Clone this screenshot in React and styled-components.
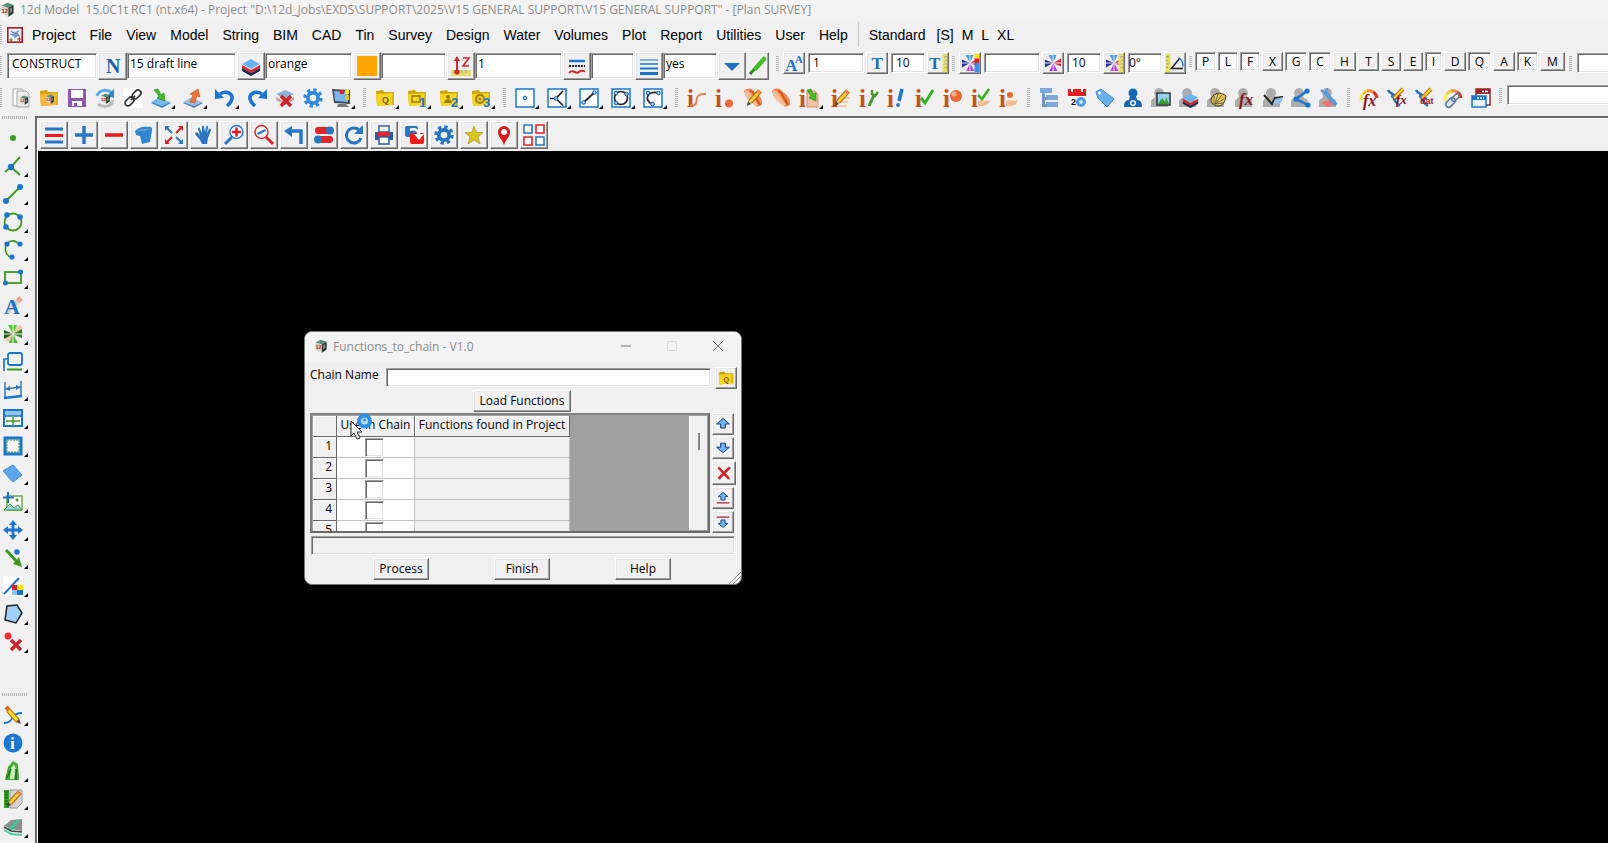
import React from "react";
import styled, { createGlobalStyle, css } from "styled-components";

const UI = `"Open Sans", "Noto Sans", sans-serif`;
const BLUE = "#1a75cf";
const GREEN = "#3f9a1e";
const RED = "#d8232a";
const RUST = "#c8501a";

const GlobalStyle = createGlobalStyle`
  * { box-sizing: border-box; }
  body { margin: 0; background: #f0f0f0; font-family: ${UI}; font-size: 12px; color: #000; overflow: hidden; }
  button, input { font: inherit; color: inherit; border-radius: 0; }
  svg { overflow: visible; flex: none; }
`;

/* ---------- bevels ---------- */
const raised = css`
  border: 1px solid;
  border-color: #fff #696969 #696969 #fff;
  box-shadow: inset -1px -1px 0 #a0a0a0, inset 1px 1px 0 #e6e6e6;
  background: #f0f0f0;
`;
const sunken = css`
  border: 1px solid;
  border-color: #a0a0a0 #fff #fff #a0a0a0;
  box-shadow: inset 1px 1px 0 #696969, inset -1px -1px 0 #e3e3e3;
  background: #fff;
`;

/* ---------- frame ---------- */
const Window = styled.div`
  display: flex;
  flex-direction: column;
  height: 100vh;
  overflow: hidden;
`;
const TitleBar = styled.header`
  display: flex;
  align-items: center;
  gap: 5px;
  height: 21px;
  padding-bottom: 2px;
  flex: none;
  background: #f3f3f3;
  color: #8c8c8c;
  white-space: pre;
`;
const MenuBar = styled.nav`
  display: flex;
  align-items: center;
  height: 29px;
  padding-bottom: 2px;
  flex: none;
  font-family: "Liberation Sans", Arial, sans-serif;
  font-size: 14px;
`;
const MenuItem = styled.button`
  border: 0;
  background: none;
  padding: 0 ${(p) => (p.$tight ? 4 : 7)}px;
  line-height: 20px;
`;
const MenuRule = styled.span`
  width: 1px;
  height: 25px;
  margin: 0 3px;
  background: #c6c6c6;
`;
const AppIcon = styled.span`
  display: flex;
  margin: 0 2px 0 5px;
`;
const Grip = styled.span`
  flex: none;
  width: 3px;
  height: ${(p) => p.$h || 20}px;
  margin: ${(p) => p.$m || "0 5px 0 4px"};
  background: repeating-linear-gradient(#b4b4b4 0 1px, #f0f0f0 1px 2px);
`;
const FieldBar = styled.div`
  display: flex;
  align-items: flex-start;
  height: 34px;
  padding-top: 2px;
  flex: none;
`;
const Field = styled.input`
  ${sunken}
  flex: none;
  width: ${(p) => p.$w}px;
  height: ${(p) => (p.$small ? 20 : 26)}px;
  margin: 1px ${(p) => (p.$small ? 2 : 1)}px 0 0;
  padding: 0 3px ${(p) => (p.$small ? 2 : 5)}px ${(p) => (p.$pad === undefined ? 2 : p.$pad)}px;
  outline: 0;
`;
const LastField = styled(Field)`
  flex: 1;
  width: auto;
  min-width: 20px;
  margin: ${(p) => p.$top || 0}px -4px 0 0;
`;
const CommandField = styled(LastField)`
  margin: 0 -4px 6px 0;
`;
const FieldButton = styled.button`
  ${raised}
  flex: none;
  display: flex;
  align-items: center;
  justify-content: center;
  width: ${(p) => p.$w || 29}px;
  height: ${(p) => (p.$small ? 22 : 28)}px;
  margin-right: ${(p) => p.$gap || 0}px;
  padding: 0;
`;
const Toggle = styled.button`
  ${(p) => (p["aria-pressed"] ? sunken : raised)}
  ${(p) =>
    p["aria-pressed"] &&
    css`
      background: repeating-conic-gradient(#fff 0 25%, #f0f0f0 0 50%) 0 0 / 2px 2px;
    `}
  flex: none;
  width: ${(p) => p.$w}px;
  height: 19px;
  margin-right: 2px;
  padding: 0;
  line-height: 14px;
`;
const IconBar = styled.div`
  display: flex;
  align-items: center;
  height: 28px;
  padding-left: 4px;
  flex: none;
`;
const Tool = styled.button`
  position: relative;
  flex: none;
  display: flex;
  align-items: center;
  width: ${(p) => (p.$menu ? 32 : 28)}px;
  height: 28px;
  padding: 0 0 0 4px;
  border: 0;
  background: none;
  &::after {
    content: "";
    display: ${(p) => (p.$menu ? "block" : "none")};
    position: absolute;
    right: 4px;
    bottom: 3px;
    border: 2px solid;
    border-color: transparent #000 #000 transparent;
  }
`;
const Body = styled.div`
  display: flex;
  flex: 1;
  min-height: 0;
`;
const Side = styled.aside`
  flex: none;
  display: flex;
  flex-direction: column;
  width: 35px;
`;
const SideGrip = styled.span`
  flex: none;
  width: 26px;
  height: 3px;
  margin: ${(p) => p.$top}px 0 5px 2px;
  background: repeating-linear-gradient(90deg, #b4b4b4 0 1px, #f0f0f0 1px 2px);
`;
const SideTool = styled(Tool)`
  padding-left: 3px;
`;
const View = styled.main`
  flex: 1;
  min-width: 0;
  display: flex;
  flex-direction: column;
  margin-top: 4px;
  border-top: 2px solid #696969;
  border-left: 2px solid #696969;
`;
const ViewBar = styled.div`
  display: flex;
  gap: 2px;
  height: 33px;
  flex: none;
  padding: 2px 0 0 2px;
  border: solid #fff;
  border-width: 1px 0 0 1px;
`;
const ViewButton = styled.button`
  ${raised}
  display: flex;
  align-items: center;
  justify-content: center;
  width: 28px;
  height: 28px;
  padding: 0;
`;
const Canvas = styled.section`
  position: relative;
  flex: 1;
  background: #000;
  border-left: 1px solid #fff;
`;

/* ---------- dialog ---------- */
const Dialog = styled.div`
  position: absolute;
  left: 266px;
  top: 180px;
  width: 438px;
  border-radius: 8px;
  background: #f0f0f0;
  overflow: hidden;
  border: 1px solid #777;
`;
const DialogTitle = styled.div`
  display: flex;
  align-items: center;
  height: 30px;
  padding: 0 0 2px 9px;
  background: #f3f3f3;
  color: #8c8c8c;
`;
const Caption = styled.span`
  flex: 1;
  padding-left: 5px;
`;
const WinButton = styled.button`
  width: 46px;
  height: 28px;
  padding: 0;
  border: 0;
  background: none;
  display: flex;
  align-items: center;
  justify-content: center;
`;
const DialogBody = styled.div`
  padding: 5px 4px 4px 5px;
`;
const NameRow = styled.div`
  display: flex;
  align-items: flex-start;
  label { width: 76px; line-height: 16px; }
`;
const NameField = styled(Field)`
  flex: 1;
  height: 19px;
  margin: 1px 4px 0 0;
`;
const PushButton = styled.button`
  ${raised}
  width: ${(p) => p.$w}px;
  height: 22px;
  padding: 0 0 2px;
`;
const Center = styled.div`
  display: flex;
  justify-content: center;
  margin: 1px 3px 1px 0;
`;
const GridRow = styled.div`
  display: flex;
  gap: 2px;
`;
const GridFrame = styled.div`
  flex: none;
  display: flex;
  width: 400px;
  height: 120px;
  padding: 1px;
  border: 2px solid;
  border-color: #808080 #696969 #696969 #808080;
  background: #a0a0a0;
  overflow: hidden;
`;
const Grid = styled.table`
  border-collapse: separate;
  border-spacing: 0;
  table-layout: fixed;
  width: 257px;
  th, td { height: 21px; padding: 0; font-weight: 400; border: solid #c0c0c0; border-width: 0 1px 1px 0; }
  th { border-color: #696969; background: #f0f0f0; box-shadow: inset 1px 1px 0 #fff; line-height: 16px; padding-bottom: 2px; }
  tbody th { text-align: right; padding-right: 4px; }
`;
const CheckCell = styled.td`
  background: #fff;
  text-align: center;
`;
const PlainCell = styled.td`
  background: #f0f0f0;
`;
const Check = styled.input.attrs({ type: "checkbox" })`
  ${sunken}
  appearance: none;
  display: block;
  width: 19px;
  height: 19px;
  margin: 0 0 0 28px;
`;
const Scroll = styled.div`
  width: 18px;
  height: 114px;
  margin-left: auto;
  padding: 17px 0 0 8px;
  background: #f0f0f0;
  border-left: 1px solid #fff;
`;
const Thumb = styled.div`
  width: 2px;
  height: 17px;
  background: #858585;
`;
const SideButtons = styled.div`
  display: flex;
  flex-direction: column;
  gap: 2px;
`;
const RowButton = styled(FieldButton)`
  width: ${(p) => (p.$big ? 24 : 22)}px;
  height: ${(p) => (p.$big ? 24 : 22)}px;
`;
const Status = styled.div`
  ${sunken}
  height: 19px;
  margin: 3px 2px 3px 1px;
  background: #f0f0f0;
`;
const Actions = styled.div`
  display: flex;
  gap: 65px;
  padding-left: 63px;
`;
const SizeGrip = styled.svg`
  position: absolute;
  right: 0;
  bottom: 0;
`;
const Cursor = styled.svg`
  position: absolute;
  left: 312px;
  top: 262px;
  pointer-events: none;
`;

/* ---------- drawings ---------- */
const S = ({ s = 20, children, ...r }) => (
  <svg width={s} height={s} viewBox="0 0 20 20" fill="none" aria-hidden="true" {...r}>
    {children}
  </svg>
);
const L = ({ d, c = BLUE, w = 2, f = "none", ...r }) => <path d={d} stroke={c} strokeWidth={w} fill={f} {...r} />;
const P = ({ d, f = BLUE, ...r }) => <path d={d} fill={f} {...r} />;
const D = ({ x, y, r = 2, f = BLUE, ...o }) => <circle cx={x} cy={y} r={r} fill={f} {...o} />;
const G = ({ x = 0, y = 17, z = 18, f = BLUE, children, serif = true, italic }) => (
  <text x={x} y={y} fontSize={z} fill={f} fontWeight="700" fontStyle={italic ? "italic" : "normal"} fontFamily={serif ? '"Liberation Serif", serif' : '"Liberation Sans", sans-serif'}>
    {children}
  </text>
);

const Cube = () => (
  <>
    <P d="M2 5 10 1l8 3-7 4z" f="#5b8d78" />
    <P d="M11 8l7-4v11l-7 5z" f="#26332d" />
    <P d="M2 5l9 3v12L2 15z" f="#dcd3ce" />
    <P d="M13 9l3-2v6l-3 2z" f="#7f908a" />
    <G x={2} y={14} z={8} f="#b82a2a" serif={false}>12</G>
  </>
);
const Person = () => <P d="M8 0a5 5 0 0 1 4 8c0 3 5 2 5 6v5H0v-5c0-4 4-3 4-6a5 5 0 0 1 4-8z" f="#acacac" />;
const Folder = ({ c = "#f4d51d" }) => (
  <>
    <P d="M1 3l7-1 1 2h10v12l-17 2z" f="#cfa30e" />
    <P d="M1 6l18-1v12L2 18z" f={c} />
    <P d="M17 5h2v12l-2 .2z" f="#d9b312" />
  </>
);
const Gear = ({ c = BLUE, hole = "#f0f0f0" }) => (
  <>
    <circle cx="10" cy="10" r="8" stroke={c} strokeWidth="3.4" strokeDasharray="3.3 2.98" />
    <circle cx="10" cy="10" r="7" fill={c} />
    <D x={10} y={10} r={3.3} f={hole} />
  </>
);
const Info = () => <G x={0} y={19} z={25} f={RUST}>i</G>;
const Pencil = () => (
  <>
    <L d="M7 14 17 3" c="#a06a10" w={5} />
    <L d="M7 14 17 3" c="#ffc935" w={3} />
    <L d="M15 5l2-2" c="#f0875c" w={4} />
    <P d="M4 18l1-5 3 3z" f="#443" />
  </>
);
const PencilBack = () => (
  <>
    <L d="M5 5 15 16" c="#b0780c" w={5} />
    <L d="M5 5 15 16" c="#ffdc20" w={3} />
    <L d="M3 2l3 3" c="#e06a20" w={4} />
    <P d="M18 19l-5-2 3-3z" f="#644" />
  </>
);
const Pin = ({ green }) => {
  const c = green ? ["#49d12a", "#2d7d1c", "#55b83c", "#215f18"] : ["#4a9be6", "#d22b45", "#b13be0", "#31319c"];
  return (
    <>
      <P d="M10 10 5 1h9z" f={c[0]} />
      <P d="M10 10 19 5v9z" f={c[1]} />
      <P d="M10 10l5 9H6z" f={c[2]} />
      <P d="M10 10 1 15V6z" f={c[3]} />
      <L d="M10 10V1M10 10h9M10 10v9M10 10H1" c="#f6f6f6" w={1} />
    </>
  );
};
const Ruler = () => (
  <>
    <P d="M15 0h5v20h-5z" f="#e6df6b" />
    <L d="M17 3h3M18 7h2M17 11h3M18 15h2" c="#999" w={1} />
  </>
);
const Layers = () => (
  <>
    <P d="M1 12l9 5 9-5v3l-9 5-9-5z" f="#16294f" />
    <P d="M1 9l9 5 9-5v3l-9 5-9-5z" f={RED} />
    <P d="M10 3l9 5-9 5-9-5z" f="#69b5f3" />
  </>
);
const Boxed = ({ children }) => (
  <>
    <rect x="1" y="1" width="18" height="18" fill="#fafcff" stroke={BLUE} strokeWidth="1.5" />
    {children}
  </>
);
const Node = ({ x, y }) => <circle cx={x} cy={y} r="1.8" fill="#8fc4f5" stroke="#1a5fae" strokeWidth="1" />;
const Hand = () => (
  <>
    <P d="M1 3c2-3 6-3 9-1l3 3c4 2 7 7 6 12l-5 2C11 14 3 13 1 3z" f="#f08a5a" />
    <P d="M2 3c2-1 4 0 5 2l8 12-3 1C7 13 1 10 2 3z" f="#f9bd98" />
    <L d="M7 3c3 0 4 3 6 7l4 7" c="#d65316" w={2} />
  </>
);
const Palm = () => <P d="M7 13c3-2 7 1 12-1-1 5-5 7-12 6z" f="#f5bd95" />;
const Needle = () => (
  <>
    <L d="M1 2c2 5 7 3 9 8M4 8l8 3M6 8c1 5 3 7 7 10" c="#2b70b8" w={2.5} />
    <L d="M7 10l9-9" c="#a86c10" w={4} />
    <L d="M7 10l9-9" c="#ffc935" w={2.4} />
  </>
);
const Gauge = () => (
  <>
    <L d="M2 13a8.500 8.500 0 0 1 2-7" c="#f7ea62" w={3} />
    <L d="M4 6a8 8 0 0 1 4-3" c="#f3cf2e" w={3} />
    <L d="M8 3a8 8 0 0 1 6 1" c="#f0902e" w={3} />
    <L d="M14 4a8 8 0 0 1 4 6" c="#e03024" w={3} />
  </>
);

const icons = {
  app: <Cube />,
  menuApp: <><rect x="1" y="1" width="18" height="18" fill="#e6f0f8" stroke="#b01c24" strokeWidth="2" /><L d="M5 5l4 3 6-3M4 9l4 1M12 9l4 3M10 10v4" c="#5a8fc8" w={1.5} /><P d="M7 8l5-2 3 3-4 4-4-2z" f="#7d95ad" /><L d="M3 16h4M5 14v4" c={GREEN} w={1.5} /><L d="M13 15h5M15.500 13v5" c={RED} w={1.5} /></>,
  N: <G x={3} y={17} z={20} f="#1c61a8">N</G>,
  layers: <Layers />,
  swatch: <rect x="0" y="0" width="20" height="20" fill="#ffa500" />,
  z: <><rect x="0" y="14" width="20" height="6" fill="#e6df6b" /><L d="M3 14v3M7 14v3M11 14v3M15 14v3" c="#999" w={1} /><L d="M6 4v12" c={RED} w={2} /><P d="M6 0l3 5H3z" f={RED} /><D x={6} y={16} r={2.6} f={RED} /><L d="M12 2h6l-6 8h6" c={RED} w={1.6} /></>,
  styles: <><L d="M2 5h16" w={2.5} /><L d="M2 10h16" c="#222" w={2} strokeDasharray="2 1" /><L d="M2 17c4-5 7 2 10-1s4 0 6-1" c={RED} w={2} /></>,
  weights: <><L d="M1 4h18" w={1} /><L d="M1 8h18" w={1.500} /><L d="M1 12.500h18" w={2} /><L d="M1 17.500h18" w={3} /></>,
  down: <P d="M2 7h16l-8 8z" f="#1c70c8" />,
  brush: <><L d="M2 18 12 7" c="#2e8a1e" w={3} /><L d="M8 12l8-9" c="#45c026" w={4.500} strokeLinecap="round" /><L d="M2 18l2-2" c="#666" w={2} /></>,
  AA: <><G x={0} y={19} z={19}>A</G><G x={11} y={10} z={12}>A</G></>,
  T: <G x={4} y={17} z={19} f="#1c6fbf">T</G>,
  TR: <><G x={0} y={17} z={19} f="#1c6fbf">T</G><Ruler /></>,
  pinC: <><Pin /><P d="M15 0h5v5h-5z" f="#ffe000" /><P d="M15 5h5v5h-5z" f={RED} /><P d="M15 10h5v10h-5z" f="#3a8de0" /></>,
  pin: <Pin />,
  pinR: <><Pin /><Ruler /></>,
  angle: <><P d="M0 0h5v20H0z" f="#e6df5b" /><L d="M0 3h3M0 7h2M0 11h3M0 15h2" c="#888" w={1} /><L d="M19 16H6l9-11" c="#222" w={1.700} /><L d="M14 4c3 2 5 6 5 10" w={1.500} /></>,
  new: <><P d="M2 1h9l3 3v14H2z" f="#fafafa" stroke="#a5a5a5" /><P d="M6 3h9l3 3v13H6z" f="#ececec" stroke="#a5a5a5" /><g transform="translate(8 7) scale(.5)"><Cube /></g></>,
  open: <><Folder c="#f4b73a" /><g transform="translate(6 6) scale(.5)"><Cube /></g></>,
  save: <><P d="M1 1h18v18H1z" f="#9055ae" /><P d="M4 2h12v8H4zM5 13h10v5H5z" f="#fff" /><P d="M7 15h3v3H7z" f="#9055ae" /></>,
  reload: <><L d="M2 8c2-6 10-8 15-3" c="#5aaae8" w={3} /><P d="M19 1v9l-7-2z" f="#2f86cf" /><L d="M18 12c-1 7-10 8-15 4" c="#bbb" w={3} /><g transform="translate(5 5) scale(.55)"><Cube /></g></>,
  link: <><rect width="20" height="20" fill="#fff" /><g transform="rotate(-45 10 10)"><rect x="0" y="7" width="10" height="6" rx="3" stroke="#333" strokeWidth="1.7" /><rect x="10" y="7" width="10" height="6" rx="3" stroke="#333" strokeWidth="1.7" /><L d="M7 10h6" c="#333" w={1.5} /></g></>,
  importD: <><P d="M0 15l7-4 13 4-9 5z" f="#3c83c4" /><P d="M0 14l7-4 13 4-9 4z" f="#79b8ea" /><P d="M3 2l4-1 3 6 3-2 1 8-8-3 2-2z" f="#3fc022" stroke="#28801a" strokeWidth=".6" /></>,
  exportU: <><P d="M0 15l7-4 13 4-9 5z" f="#5580ad" /><P d="M0 14l7-4 13 4-9 4z" f="#9cc0e2" /><P d="M7 14l3-7-3-1 8-5 2 8-3-1-2 7z" f="#f0743a" stroke="#c04d17" strokeWidth=".6" /></>,
  undo: <><L d="M5 6c7-4 13 0 12 5-1 4-3 5-5 7" w={3.500} /><P d="M0 1v10l9-1z" /></>,
  redo: <><L d="M15 6C8 2 2 6 3 11c1 4 3 5 5 7" w={3.500} /><P d="M20 1v10l-9-1z" /></>,
  delLayer: <><P d="M10 2l9 4-9 5-9-5z" f="#8fb0d6" /><P d="M1 9l9 5 9-5v3l-9 5-9-5z" f="#c9a0a6" /><L d="M6 8l10 10M16 8L6 18" c="#cf2027" w={3.500} /></>,
  gear: <Gear c="#2f8ade" />,
  screen: <><P d="M1 1l18 1v14l-16-1z" f="#444b55" /><P d="M3 3l14 1v10L4 13z" f="#78b5ef" /><P d="M9 2h4v4H9z" f={RED} /><P d="M14 2h4v4h-4z" f="#ffe000" /><P d="M14 7h4v5h-4z" f="#e4c41c" /><P d="M7 16h8l3 3H6z" f="#777" /></>,
  folderQ: <><Folder /><G x={7} y={15} z={9} f="#7a6208" serif={false}>Q</G></>,
  folder1: <><Folder /><rect x="5" y="8" width="8" height="6" stroke="#9c7c10" strokeWidth="1.5" /><G x={12} y={19} z={13} serif={false}>1</G></>,
  folder2: <><Folder /><D x={9} y={9} r={2} f="#9c7c10" /><P d="M5 15c0-5 8-5 8 0z" f="#9c7c10" /><G x={12} y={19} z={13} serif={false}>2</G></>,
  folder3: <><Folder /><circle cx="9" cy="11" r="4" stroke="#9c7c10" strokeWidth="2" /><D x={9} y={11} r={1.500} f="#9c7c10" /><G x={12} y={19} z={13} serif={false}>3</G></>,
  bPoint: <Boxed><Node x={10} y={10} /></Boxed>,
  bCross: <Boxed><L d="M16 3 9 10.500M3 10.500h6l7 7" c="#222" w={1.700} /><Node x={9} y={10.500} /></Boxed>,
  bLine: <Boxed><L d="M4 15 16 4" c="#222" w={1.700} /><Node x={4.500} y={14.500} /><Node x={15.500} y={4.500} /></Boxed>,
  bCircle: <Boxed><circle cx="10" cy="10" r="6.500" stroke="#222" strokeWidth="1.700" /><Node x={5} y={5} /><Node x={15.500} y={6} /><Node x={5} y={15} /></Boxed>,
  bArc: <Boxed><L d="M9 16C0 12 5 2 15 5" c="#222" w={1.700} /><Node x={5} y={5} /><Node x={15.500} y={5} /><Node x={9.500} y={16} /></Boxed>,
  iLine: <><Info /><L d="M3 17c9 2 5-6 8-9 2-3 4-2 8-2" c="#e58155" w={2} /></>,
  iDot: <><Info /><D x={14} y={15.500} r={4} f="#f0693a" /></>,
  handPen: <><Hand /><Pencil /></>,
  hand: <Hand />,
  iImport: <><Info /><P d="M8 3h8l3 4v12H8z" f="#f3c3a5" stroke="#d99068" /><P d="M8 2l4-1 2 5 3-1v8l-7-3 2-2z" f="#3fc022" stroke="#28801a" strokeWidth=".6" /></>,
  iPen: <><Info /><L d="M8 10h11M8 14h9M7 18h9" c="#f5bd95" w={1.5} /><Pencil /></>,
  iWrench: <><Info /><L d="M10 18l5-11" c="#45962c" w={3} /><L d="M13 2v4l3 2 3-4" c="#45962c" w={2.500} /></>,
  iBang: <><Info /><L d="M15 1l-3 12" w={3.500} /><D x={11} y={17} r={1.900} /></>,
  iCheck: <><Info /><L d="M6 10l4 5 8-13" c="#35b01f" w={3} /></>,
  iBall: <><Info /><D x={13} y={8} r={6} f="#ee6a35" /><D x={11} y={6} r={2.500} f="#f9b08d" /></>,
  iPalmCheck: <><Info /><Palm /><L d="M7 7l4 4 7-10" c="#35b01f" w={2.500} /></>,
  iPalmBall: <><Info /><Palm /><D x={11} y={7} r={3} f="#ee6a35" /></>,
  tree: <><P d="M1 0h12v5H1zM7 7h12v5H7zM7 14h12v5H7z" f="#7fa8da" /><P d="M3 5h3v4h2v3H6v4h2v3H3z" f="#7399c8" /></>,
  calendar: <><P d="M1 1h18v18H1z" f="#f8f8f8" /><P d="M1 1h18v7H1z" f="#e02020" /><L d="M5 0v4M15 0v4" c="#fff" w={2} /><G x={4} y={17} z={9} f="#111" serif={false}>2</G><D x={14} y={14} r={5} f="#4f9ce8" /><D x={14} y={14} r={2} f="#c7e1fb" /></>,
  tag: <><P d="M1 4l5-3 13 10-7 8L3 10z" f="#6cb0ee" stroke="#3b87cc" /><D x={4.500} y={5} r={1.500} f="#fff" /></>,
  user: <><D x={10} y={5} r={4.500} f="#1766b4" /><P d="M7 8h6l1 4c4 0 5 3 5 7H1c0-4 1-7 5-7z" f="#1766b4" /><D x={10} y={15} r={3} f="#f0f0f0" /><D x={10} y={15} r={1.500} f="#1766b4" /></>,
  pImage: <><Person /><rect x="6" y="5" width="13" height="12" fill="#9bd0f5" stroke="#333" strokeWidth="1.500" /><P d="M7 16l4-6 3 4 1-5 3 7z" f="#2f9a28" /></>,
  pLayers: <><Person /><g transform="translate(3 3) scale(.85)"><Layers /></g></>,
  pShell: <><Person /><P d="M4 12c1-7 10-9 15-4-1 6-3 10-8 10-5-1-7-3-7-6z" f="#e5c552" stroke="#333" /><L d="M7 16l0-8M8 16l3-10M8 16l7-9M8 16l9-5M8 16l8-1" c="#554" w={.8} /></>,
  pFx: <><Person /><G x={4} y={17} z={17} f="#8a1420" italic>fx</G></>,
  pRoad: <><Person /><L d="M1 7l8 9 3-6 8-1" c="#222" w={2} /><P d="M12 11l8-2-2 6-8 1z" f="#8ec3f2" /></>,
  pShare: <><Person /><L d="M16 3 5 11l12 6" w={2.500} /><D x={16} y={3} r={2.600} /><D x={5} y={11} r={2.600} /><D x={17} y={17} r={2.600} /></>,
  pTools: <><Person /><P d="M2 15l10-4 6 4-9 4z" f="#f07070" /><L d="M6 4 17 17" c="#5b9ad8" w={4} /><L d="M2 2l5 4M8 0l-1 5" c="#5b9ad8" w={2.500} /></>,
  gFx: <><Gauge /><G x={4} y={18} z={16} f="#8a1420" italic>fx</G></>,
  nFx: <><Needle /><G x={9} y={16} z={13} f="#8a1420" italic>fx</G></>,
  nDat: <><Needle /><G x={5} y={16} z={9} f="#a01820" serif={false}>dat</G></>,
  gLink: <><Gauge /><g transform="rotate(-45 10 12)"><rect x="1" y="9" width="11" height="6" rx="3" fill="#dce6ef" stroke="#5f7a96" strokeWidth="1.500" /><rect x="9" y="10" width="9" height="4" rx="2" stroke="#5f7a96" strokeWidth="1.500" /></g></>,
  windows: <><rect x="5" y="1" width="14" height="16" stroke="#98242c" strokeWidth="1.500" fill="#fff" /><P d="M5 1h14v5H5z" f="#98242c" /><rect x="1" y="8" width="14" height="11" stroke={BLUE} strokeWidth="1.500" fill="#e8f3fd" /><P d="M1 8h14v4H1z" /><L d="M6 10h2M9 10h2M12 10h1M11 3.500h2M14 3.500h3" c="#fff" w={1.500} /></>,
  vMenu: <><L d="M1 4h18M1 17h18" c="#2877c4" w={3} /><L d="M1 10.500h18" c="#f01c1c" w={3} /></>,
  vPlus: <L d="M10 1v18M1 10h18" c="#2877c4" w={3.5} />,
  vMinus: <L d="M1 10h18" c="#e8191c" w={3.5} />,
  vShape: <><P d="M1 6c3-3 8-5 12-4 4-1 6 1 5 3l-2 12-8 2-2-8-4-1z" f="#2f86cc" /><P d="M2 7c5-3 10-4 16-3" f="#68aade" /></>,
  vFit: <><L d="M3 3l5 5M17 17l-5-5" c="#2877c4" w={2} /><L d="M17 3l-5 5M3 17l5-5" c={RED} w={2} /><P d="M1 1h5L1 6zM19 19h-5l5-5z" f="#2877c4" /><P d="M19 1v5l-5-5zM1 19v-5l5 5z" f={RED} /></>,
  vHand: <P d="M6 10 4 4c0-2 2-2 2 0l2 4V2c0-2 2-2 2 0l1 5 1-5c0-2 2-1 2 0l-1 6 2-4c1-1 2 0 2 1l-3 8-1 6H8l-2-4-5-6c0-2 2-2 3-1z" f="#2d77c2" />,
  vZoomIn: <><L d="M8 12l-7 7" c="#2877c4" w={3} /><circle cx="12.500" cy="7" r="6.500" stroke="#2877c4" strokeWidth="1.400" fill="#f7faff" /><L d="M12.500 2.500v9M8 7h9" c="#e8191c" w={2.500} /></>,
  vZoomOut: <><L d="M12 12l7 7" c={RED} w={3} /><circle cx="7.500" cy="7" r="6.500" stroke={RED} strokeWidth="1.400" fill="#f7faff" /><L d="M3.500 9l8-4" c="#2877c4" w={2.500} /></>,
  vBack: <><L d="M5 6h12v13" c="#2877c4" w={3.500} /><P d="M0 6l8-5v11z" f="#2877c4" /></>,
  vToggle: <><rect x="1" y="2" width="18" height="7" rx="3" fill="#e0262c" /><D x={16} y={5.500} r={4} f="#2877c4" /><rect x="1" y="11" width="18" height="7" rx="3" fill="#e0262c" /><D x={4} y={14.500} r={4} f="#2877c4" /></>,
  vRefresh: <><L d="M15 5a7.500 7.500 0 1 0 2 8" c="#2877c4" w={3} /><P d="M19 0v9h-9z" f="#2877c4" /></>,
  vPrint: <><P d="M5 1h10v6H5z" f="#fff" stroke="#2461a4" strokeWidth="1.500" /><P d="M1 7h18v8H1z" f="#e0262c" /><P d="M1 7h3v8H1zM16 7h3v8h-3z" f="#2461a4" /><P d="M5 12h10v7H5z" f="#fff" stroke="#2461a4" strokeWidth="1.500" /></>,
  vSwap: <><rect x="1" y="1" width="13" height="11" rx="2" fill="#2877c4" /><rect x="6" y="8" width="14" height="11" rx="2" fill="#f01c1c" /><L d="M6 5c6-2 9 1 9 6" c="#fff" w={2.500} /><P d="M10 9h10l-5 6z" f="#fff" /></>,
  vGear: <Gear c="#2275c2" />,
  vStar: <P d="M10 1l2.500 6.500H19l-5 4.500 2 7-6-4-6 4 2-7-5-4.500h6.500z" f="#d6c322" stroke="#a99a1c" strokeWidth=".7" />,
  vPin: <><P d="M10 20C8 14 4 12 4 7a6 6 0 0 1 12 0c0 5-4 7-6 13z" f="#e01c20" /><D x={10} y={7} r={3} f="#fff" /></>,
  vGrid: <><path d="M0 0h8v8H0zM12 12h8v8h-8z" fill="#fff" stroke="#2877c4" strokeWidth="1.600" /><path d="M12 0h8v8h-8zM0 12h8v8H0z" fill="#fff" stroke="#e0262c" strokeWidth="1.600" /></>,
  point: <D x={10} y={10} r={3} f={GREEN} />,
  cross: <><L d="M17 1 8 11l-6 5M8 11l9 8" c={GREEN} /><D x={8} y={11} r={3.200} /></>,
  line: <><L d="M3 17 17 3" c={GREEN} /><D x={3} y={17} r={3} /><D x={17} y={3} r={3} /></>,
  circle: <><circle cx="10" cy="10" r="8.500" stroke={GREEN} strokeWidth="1.800" /><D x={4} y={3} r={2.800} /><D x={17} y={5} r={2.800} /><D x={3} y={15} r={2.800} /></>,
  arc: <><L d="M9 18C-1 14 1 0 11 1l6 3" c={GREEN} w={1.800} /><D x={4} y={4} r={2.600} /><D x={17} y={4} r={2.600} /><D x={9} y={17} r={2.600} /></>,
  rect: <><rect x="2" y="4" width="16" height="11" stroke={GREEN} strokeWidth="1.800" /><D x={17.500} y={4} r={2.500} /><D x={2.500} y={15} r={2.500} /></>,
  textA: <><L d="M4 16 18 2" c="#e3cfb8" w={5} /><L d="M15 5l3-3" c="#e8a48c" w={5} /><G x={1} y={18} z={22}>A</G></>,
  pinG: <><L d="M4 17 18 2" c="#e8c9b0" w={5} /><Pin green /></>,
  box: <><L d="M1 19V7h4" w={1.700} /><rect x="5" y="1" width="14" height="12" rx="2" stroke={BLUE} strokeWidth="1.800" /><L d="M4 17.500h15" c={GREEN} w={2} /></>,
  dim: <><L d="M2 2v16M18 1v14M3 9l14-2" c="#3476b8" w={1.500} /><P d="M2 9l5-3v5zM18 7l-5-2v5z" f="#3476b8" /><L d="M1 18l18-2" w={2.500} /></>,
  table: <><rect x="1" y="2" width="18" height="16" stroke={BLUE} strokeWidth="2" fill="#fff" /><P d="M2 3h16v5H2z" f="#8ec6f8" /><L d="M1 8h18" w={1.500} /><L d="M3 13h14M10 9v8" c={GREEN} w={1.500} /></>,
  square: <><rect x="2" y="2" width="16" height="16" stroke={BLUE} strokeWidth="3" /><rect x="4" y="4" width="12" height="12" stroke={GREEN} strokeWidth="1" strokeDasharray="2 1" fill="#f4f4f4" /></>,
  diamond: <P d="M0 7l10-6 9 10-9 7z" f="#5aa6ec" stroke="#3f8bd2" />,
  image: <><rect x="4" y="4" width="15" height="14" stroke={GREEN} strokeWidth="1.200" fill="#fff" /><P d="M1 18l6-6 4 4 4-3 4 5z" f="#9ed0f6" stroke={GREEN} /><L d="M5 0v11M0 5.500h11" w={2} /><D x={14} y={8} r={1.500} f={GREEN} /></>,
  move: <><L d="M10 3v14M3 10h14" w={2.800} /><P d="M10 0l4 5H6zM10 20l4-5H6zM0 10l5-4v8zM20 10l-5-4v8z" /></>,
  arrow: <><L d="M3 2l12 13" c={GREEN} w={3} /><P d="M19 19l-9-3 6-7z" f={GREEN} /><D x={14} y={4} r={2.800} /></>,
  color: <><rect width="20" height="20" fill="#fff" /><L d="M1 18 16 2" w={2} /><P d="M9 9h5v5H9z" f={RED} /><P d="M14 9h6v5h-6z" f="#ffe000" /><P d="M9 14h5v5H9z" f="#8ec6f8" /><P d="M14 14h6v5h-6z" /></>,
  pentagon: <P d="M4 2l10-1 5 8-6 10-11-3z" f="#9ed0f8" stroke="#222" strokeWidth="1.500" />,
  remove: <><D x={5} y={4} r={3.500} f="#ef2d2d" /><L d="M8 8l10 10M18 8 8 18" c="#cb2630" w={3.500} /></>,
  pencilLine: <><L d="M1 18c6 0 7-3 9-6s5-4 9-4" w={1.800} /><PencilBack /></>,
  info: <><D x={10} y={10} r={9.500} f="#1a78cf" /><G x={7} y={16} z={17} f="#fff">i</G></>,
  green: <><P d="M2 19 5 6l5-6 5 3 1 16z" f="#43a834" /><P d="M7 18 8 7l3-4 2 5-2 10z" f="#c9f0b4" /><L d="M13 19V8M4 17l4-9" c="#1b6a18" w={1.500} /></>,
  report: <><P d="M1 1h5v18H1z" f="#3a9c2c" /><P d="M7 1h12v13l-5 5H7z" f="#d4d4d4" stroke="#999" /><L d="M2 3h3M2 6h3M2 9h3M2 12h3M2 15h3" c="#14500f" w={1} /><Pencil /></>,
  surface: <><P d="M1 9 8 3l11-1v12L8 12z" f="#8a9090" /><P d="M4 12C9 10 10 6 13 3h3c-3 4-3 8-8 11z" f="#46c49a" /><L d="M1 10l7 4 11 1" c="#444" w={1.500} /><L d="M1 13l7 4 11 1" c="#52c8a2" w={2} /></>,
  up: <P d="M10 3l8 7h-5v5H7v-5H2z" f="#6fb4f4" stroke="#17386e" strokeWidth="1.200" />,
  dn: <P d="M10 16l8-7h-5V4H7v5H2z" f="#6fb4f4" stroke="#17386e" strokeWidth="1.200" />,
  del: <><L d="M4 4l13 14M18 3 4 18" c="#7889b5" w={2} /><L d="M3 3l13 14M17 3 3 17" c="#d8232a" w={3} /></>,
  top: <><P d="M10 2l7 6h-4v5H7V8H3z" f="#6fb4f4" stroke="#17386e" strokeWidth="1.200" /><L d="M1 17h18" c="#a3243a" w={2} /></>,
  bottom: <><P d="M10 18l7-6h-4V7H7v5H3z" f="#6fb4f4" stroke="#17386e" strokeWidth="1.200" /><L d="M1 3h18" c="#a3243a" w={2} /></>,
};
const Icon = ({ n, s }) => <S s={s}>{icons[n]}</S>;

/* ---------- data ---------- */
const menus = ["Project", "File", "View", "Model", "String", "BIM", "CAD", "Tin", "Survey", "Design", "Water", "Volumes", "Plot", "Report", "Utilities", "User", "Help"];
const fields = [
  ["Model", "CONSTRUCT", 90, "N", 29, 0, 4],
  ["Linestyle", "15 draft line", 109, "layers", 28, 0],
  ["Colour", "orange", 87, "swatch", 28, 0],
  ["Height", "", 65, "z", 28, 0],
  ["Weight", "1", 87, "styles", 28, 0],
  ["Style", "", 43, "weights", 28, 0],
  ["Tinable", "yes", 54, "down", 28, 0],
];
const toggles = [["P", 21, 1], ["L", 20, 1], ["F", 20, 1], ["X", 21], ["G", 22, 1], ["C", 22, 1], ["H", 23], ["T", 21], ["S", 20], ["E", 20], ["I", 17, 1], ["D", 22], ["Q", 23, 1], ["A", 22], ["K", 21, 1], ["M", 25]];
const toolGroups = [
  ["new", "open", "save", "reload", "link", "importD*", "exportU*", "undo*", "redo", "delLayer", "gear", "screen*"],
  ["folderQ*", "folder1*", "folder2*", "folder3*"],
  ["bPoint*", "bCross*", "bLine*", "bCircle*", "bArc*"],
  ["iLine", "iDot", "handPen", "hand", "iImport*", "iPen", "iWrench", "iBang", "iCheck", "iBall", "iPalmCheck", "iPalmBall"],
  ["tree", "calendar", "tag", "user", "pImage", "pLayers", "pShell", "pFx", "pRoad", "pShare", "pTools"],
  ["gFx", "nFx", "nDat", "gLink", "windows"],
];
const viewTools = ["vMenu", "vPlus", "vMinus", "vShape", "vFit", "vHand", "vZoomIn", "vZoomOut", "vBack", "vToggle", "vRefresh", "vPrint", "vSwap", "vGear", "vStar", "vPin", "vGrid"];
const sideA = ["point", "cross", "line", "circle", "arc", "rect", "textA", "pinG", "box", "dim", "table", "square", "diamond", "image", "move", "arrow", "color", "pentagon", "remove"];
const sideB = ["pencilLine", "info", "green", "report", "surface"];
const SmallButton = ({ n, gap = 3 }) => (
  <FieldButton $small $w={22} $gap={gap} aria-label={n}><Icon n={n} s={18} /></FieldButton>
);

export default function App() {
  return (
    <Window>
      <GlobalStyle />
      <TitleBar>
        <Icon n="app" s={15} />
        <span>{'12d Model  15.0C1t RC1 (nt.x64) - Project "D:\\12d_Jobs\\EXDS\\SUPPORT\\2025\\V15 GENERAL SUPPORT\\V15 GENERAL SUPPORT" - [Plan SURVEY]'}</span>
      </TitleBar>

      <MenuBar>
        <Grip $m="0 0 0 -1px" />
        <AppIcon><Icon n="menuApp" s={16} /></AppIcon>
        {menus.map((m) => <MenuItem key={m}>{m}</MenuItem>)}
        <MenuRule />
        <MenuItem>Standard</MenuItem>
        {["[S]", "M", "L", "XL"].map((m) => <MenuItem key={m} $tight>{m}</MenuItem>)}
      </MenuBar>

      <FieldBar>
        <Grip $m="4px 5px 0 -1px" />
        {fields.map(([label, value, w, icon, bw, gap, pad]) => (
          <React.Fragment key={label}>
            <Field aria-label={label} defaultValue={value} $w={w} $pad={pad} />
            <FieldButton $w={bw} $gap={gap} aria-label={`Pick ${label}`}><Icon n={icon} s={20} /></FieldButton>
          </React.Fragment>
        ))}
        <FieldButton $w={23} aria-label="Match"><Icon n="brush" s={20} /></FieldButton>
        <Grip $h={16} $m="4px 4px 0 7px" />
        <SmallButton n="AA" />
        <Field $small aria-label="Text style" defaultValue="1" $w={56} $pad={4} />
        <SmallButton n="T" />
        <Field $small aria-label="Text height" defaultValue="10" $w={34} $pad={4} />
        <SmallButton n="TR" />
        <Grip $h={16} $m="4px 4px 0 0" />
        <SmallButton n="pinC" />
        <Field $small aria-label="Symbol" defaultValue="" $w={56} />
        <SmallButton n="pin" />
        <Field $small aria-label="Symbol size" defaultValue="10" $w={34} $pad={4} />
        <SmallButton n="pinR" />
        <Field $small aria-label="Symbol angle" defaultValue="0°" $w={34} $pad={0} />
        <SmallButton n="angle" />
        <Grip $h={12} $m="4px 3px 0 0" />
        {toggles.map(([t, w, on]) => <Toggle key={t} $w={w} aria-pressed={!!on}>{t}</Toggle>)}
        <Grip $h={16} $m="4px 5px 0 2px" />
        <LastField $small $top={1} aria-label="Search" />
      </FieldBar>

      <IconBar>
        {toolGroups.map((group, i) => (
          <React.Fragment key={i}>
            {i === 0 ? <Grip $m="0 5px 0 -5px" /> : <Grip />}
            {group.map((t) => {
              const n = t.replace("*", "");
              return <Tool key={n} $menu={t.endsWith("*")} aria-label={n}><Icon n={n} /></Tool>;
            })}
          </React.Fragment>
        ))}
        <Grip $h={16} $m="0 5px 4px 4px" />
        <CommandField $small aria-label="Command" />
      </IconBar>

      <Body>
        <Side>
          <SideGrip $top={4} />
          {sideA.map((n) => <SideTool key={n} $menu aria-label={n}><Icon n={n} /></SideTool>)}
          <SideGrip $top={37} />
          {sideB.map((n) => <SideTool key={n} $menu aria-label={n}><Icon n={n} /></SideTool>)}
        </Side>
        <View>
          <ViewBar>
            {viewTools.map((n) => <ViewButton key={n} aria-label={n}><Icon n={n} s={20} /></ViewButton>)}
          </ViewBar>
          <Canvas>
            <Dialog role="dialog" aria-labelledby="dialog-title">
              <DialogTitle>
                <Icon n="app" s={14} />
                <Caption id="dialog-title">Functions_to_chain - V1.0</Caption>
                <WinButton aria-label="Minimise"><S s={10} stroke="#777"><path d="M0 10h20" strokeWidth="2" /></S></WinButton>
                <WinButton aria-label="Maximise" disabled><S s={10} stroke="#ddd"><path d="M1 1h18v18H1z" strokeWidth="2" /></S></WinButton>
                <WinButton aria-label="Close"><S s={10} stroke="#777"><path d="M0 0l20 20M20 0 0 20" strokeWidth="2" /></S></WinButton>
              </DialogTitle>
              <DialogBody>
                <NameRow>
                  <label htmlFor="chain">Chain Name</label>
                  <NameField id="chain" />
                  <FieldButton $small $w={22} aria-label="Browse"><Icon n="folderQ" s={16} /></FieldButton>
                </NameRow>
                <Center><PushButton $w={98}>Load Functions</PushButton></Center>
                <GridRow>
                  <GridFrame>
                    <Grid>
                      <colgroup><col width="24" /><col width="78" /><col width="155" /></colgroup>
                      <thead><tr><th /><th>Use in Chain</th><th>Functions found in Project</th></tr></thead>
                      <tbody>
                        {[1, 2, 3, 4, 5].map((r) => (
                          <tr key={r}>
                            <th scope="row">{r}</th>
                            <CheckCell><Check aria-label={`Use row ${r} in chain`} /></CheckCell>
                            <PlainCell />
                          </tr>
                        ))}
                      </tbody>
                    </Grid>
                    <Scroll><Thumb /></Scroll>
                  </GridFrame>
                  <SideButtons>
                    <RowButton aria-label="Move up"><Icon n="up" s={16} /></RowButton>
                    <RowButton aria-label="Move down"><Icon n="dn" s={16} /></RowButton>
                    <RowButton $big aria-label="Delete"><Icon n="del" s={16} /></RowButton>
                    <RowButton aria-label="Move to top"><Icon n="top" s={14} /></RowButton>
                    <RowButton aria-label="Move to bottom"><Icon n="bottom" s={14} /></RowButton>
                  </SideButtons>
                </GridRow>
                <Status role="status" />
                <Actions>
                  {["Process", "Finish", "Help"].map((t) => <PushButton key={t} $w={56}>{t}</PushButton>)}
                </Actions>
              </DialogBody>
              <SizeGrip width="12" height="12"><path d="M0 12 12 0M4 12l8-8M8 12l4-4" stroke="#8c8c8c" /></SizeGrip>
            </Dialog>
            <Cursor width="24" height="30" viewBox="0 0 24 30">
              <circle cx="14.500" cy="8" r="5.500" fill="#b8dcfa" stroke="#2f8fe8" strokeWidth="4" />
              <circle cx="14.500" cy="7" r="1.500" fill="#2f8fe8" />
              <path d="M1 8v15l3-3 3 6 3-1-3-6h5z" fill="#fff" stroke="#222" />
            </Cursor>
          </Canvas>
        </View>
      </Body>
    </Window>
  );
}
